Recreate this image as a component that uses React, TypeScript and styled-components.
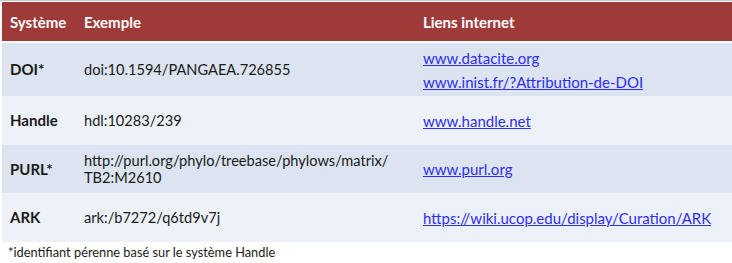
import React, {FC} from 'react'
import styled, {createGlobalStyle} from 'styled-components'

const GlobalStyle = createGlobalStyle`
    html, body {
        margin: 0;
        padding: 0;
        background: #ffffff;
    }
    body {
        font-family: Lato, "Open Sans", "Liberation Sans", sans-serif;
        color: #1a1a1a;
    }
`

const Page = styled.div`
    width: 732px;
    height: 263px;
    padding: 1px 0 0 2px;
    box-sizing: border-box;
    border-top: 1px solid #c8c8c8;
`

const Table = styled.div`
    display: grid;
    grid-template-columns: 74px 339px 1fr;
    width: 730px;
`

const HeadCell = styled.div`
    height: 39px;
    background: #9e3b39;
    color: #ffffff;
    font-weight: 700;
    font-size: 15px;
    display: flex;
    align-items: center;
    padding-left: 8px;
    border-bottom: 2px solid #ffffff;
`

const Cell = styled.div<{$odd: boolean; $h: number}>`
    height: ${p => p.$h}px;
    background: ${p => (p.$odd ? '#dbe4f0' : '#edf1f8')};
    font-size: 15px;
    line-height: 17px;
    display: flex;
    flex-direction: column;
    justify-content: center;
    padding-left: 8px;
    box-sizing: border-box;
`

const Name = styled.span`
    font-weight: 700;
`

const Example = styled.span`
    font-size: 14.6px;
`

const Link = styled.a`
    color: #2e2ef0;
    text-decoration: underline;
    line-height: 24px;
`

const Note = styled.div`
    font-size: 12.8px;
    padding: 2px 0 0 6px;
`

type Row = {
    name: string
    example: string[]
    links: string[]
    h: number
}

const rows: Row[] = [
    {name: 'DOI*', example: ['doi:10.1594/PANGAEA.726855'], links: ['www.datacite.org', 'www.inist.fr/?Attribution-de-DOI'], h: 53},
    {name: 'Handle', example: ['hdl:10283/239'], links: ['www.handle.net'], h: 49},
    {name: 'PURL*', example: ['http://purl.org/phylo/treebase/phylows/matrix/', 'TB2:M2610'], links: ['www.purl.org'], h: 48},
    {name: 'ARK', example: ['ark:/b7272/q6td9v7j'], links: ['https://wiki.ucop.edu/display/Curation/ARK'], h: 49},
]

const App: FC = () => {
    return <Page>
        <GlobalStyle />
        <Table>
            <HeadCell>Système</HeadCell>
            <HeadCell>Exemple</HeadCell>
            <HeadCell>Liens internet</HeadCell>
            {rows.map((row, i) => (
                <React.Fragment key={row.name}>
                    <Cell $odd={i % 2 == 0} $h={row.h}>
                        <Name>{row.name}</Name>
                    </Cell>
                    <Cell $odd={i % 2 == 0} $h={row.h}>
                        {row.example.map(line => <Example key={line}>{line}</Example>)}
                    </Cell>
                    <Cell $odd={i % 2 == 0} $h={row.h}>
                        {row.links.map(link => <Link key={link} href="#">{link}</Link>)}
                    </Cell>
                </React.Fragment>
            ))}
        </Table>
        <Note>*identifiant pérenne basé sur le système Handle</Note>
    </Page>
}

export default App
